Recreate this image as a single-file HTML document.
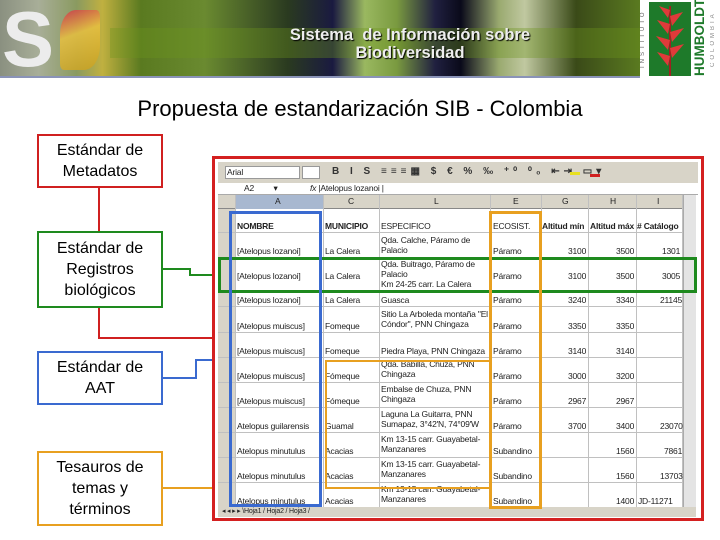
<!DOCTYPE html>
<html><head><meta charset="utf-8"><style>
*{margin:0;padding:0;box-sizing:border-box}
body{width:720px;height:540px;background:#fff;position:relative;overflow:hidden;font-family:"Liberation Sans",sans-serif}
.a{position:absolute}
.box{position:absolute;border:2px solid;text-align:center;font-size:16px;line-height:21px;color:#000;display:flex;align-items:center;justify-content:center;background:#fff}
.t{position:absolute;font-size:8.5px;color:#222;white-space:nowrap;font-family:"Liberation Sans Narrow","Liberation Sans",sans-serif;letter-spacing:-0.2px}
.vl{position:absolute;width:1px;background:#c0c0c0}
.hl{position:absolute;height:1px;background:#c0c0c0}
.vt{position:absolute;writing-mode:vertical-rl;transform:rotate(180deg);text-align:center}
</style></head><body>
<!-- header -->
<div class="a" style="left:0;top:0;width:640px;height:77px;background:linear-gradient(90deg,#8a9080 0%,#a8ae98 6%,#8a9a60 12%,#c0b040 16%,#5a7a20 22%,#6a8a30 32%,#2a3a20 45%,#1a1a40 52%,#9ab860 57%,#7a9a40 62%,#202040 68%,#0a0a1a 72%,#9aaa70 78%,#c0c8a0 82%,#3a4a18 90%,#5a7a20 100%)"></div>
<div class="a" style="left:110px;top:28px;width:530px;height:30px;background:rgba(110,150,30,0.35)"></div>
<div class="a" style="left:2px;top:0px;font-size:78px;font-weight:bold;color:#ececec;line-height:78px">S</div>
<div class="a" style="left:60px;top:10px;width:40px;height:60px;background:linear-gradient(160deg,#d0304a 0%,#e8c040 40%,#c8a020 100%);border-radius:40% 10% 40% 10%;opacity:.85"></div>
<div class="a" style="left:200px;top:26px;width:420px;text-align:center;color:#eee;font-weight:bold;font-size:16.5px;line-height:18px;text-shadow:1px 1px 1px #000">Sistema &nbsp;de Información sobre<br>Biodiversidad</div>
<div class="a" style="left:0;top:76px;width:640px;height:2px;background:#8a93b8"></div>
<div class="a" style="left:640px;top:0;width:80px;height:80px;background:#fff"></div>
<div class="a" style="left:649px;top:2px;width:42px;height:74px;background:#1e7a2a"></div>
<svg class="a" style="left:649px;top:2px" width="42" height="74"><path d="M21 4 L21 74" stroke="#a02020" stroke-width="2"/><g fill="#e03a3a"><path d="M21 8 L10 4 L19 16Z"/><path d="M21 14 L34 10 L23 24Z"/><path d="M21 22 L8 18 L19 32Z"/><path d="M21 30 L35 26 L23 40Z"/><path d="M21 38 L7 34 L19 48Z"/><path d="M21 46 L35 42 L23 56Z"/><path d="M21 54 L8 50 L19 64Z"/></g></svg>
<div class="vt" style="left:640px;top:2px;height:74px;width:8px;font-size:6px;color:#666;letter-spacing:3px">INSTITUTO</div>
<div class="vt" style="left:692px;top:2px;height:74px;width:16px;font-size:13.5px;font-weight:bold;color:#1e7a2a;line-height:16px">HUMBOLDT</div>
<div class="vt" style="left:710px;top:2px;height:74px;width:8px;font-size:6px;color:#888;letter-spacing:3px">COLOMBIA</div>
<!-- title -->
<div class="a" style="left:0;top:96px;width:720px;text-align:center;font-size:22px;color:#000">Propuesta de estandarización SIB - Colombia</div>
<!-- connectors -->
<div class="a" style="left:98px;top:187px;width:2px;height:45px;background:#d02020"></div>
<div class="a" style="left:98px;top:307px;width:2px;height:32px;background:#d02020"></div>
<div class="a" style="left:98px;top:337px;width:116px;height:2px;background:#d02020"></div>
<div class="a" style="left:162px;top:268px;width:28px;height:2px;background:#1e8a1e"></div>
<div class="a" style="left:189px;top:268px;width:2px;height:8px;background:#1e8a1e"></div>
<div class="a" style="left:189px;top:274px;width:30px;height:2px;background:#1e8a1e"></div>
<div class="a" style="left:162px;top:377px;width:35px;height:2px;background:#3a6ad0"></div>
<div class="a" style="left:195px;top:359px;width:2px;height:20px;background:#3a6ad0"></div>
<div class="a" style="left:195px;top:359px;width:35px;height:2px;background:#3a6ad0"></div>
<div class="a" style="left:162px;top:487px;width:165px;height:2px;background:#e8a020"></div>
<!-- boxes -->
<div class="box" style="left:37px;top:134px;width:126px;height:54px;border-color:#d02020">Estándar de<br>Metadatos</div>
<div class="box" style="left:37px;top:231px;width:126px;height:77px;border-color:#1e8a1e">Estándar de<br>Registros<br>biológicos</div>
<div class="box" style="left:37px;top:351px;width:126px;height:54px;border-color:#3a6ad0">Estándar de<br>AAT</div>
<div class="box" style="left:37px;top:451px;width:126px;height:75px;border-color:#e8a020">Tesauros de<br>temas y<br>términos</div>
<!-- spreadsheet -->
<div class="a" style="left:212px;top:156px;width:492px;height:365px;border:3px solid #d42020;background:#fff"></div>
<div class="a" style="left:218px;top:162px;width:480px;height:21px;background:#d8d4c8"></div>
<div class="a" style="left:225px;top:166px;width:75px;height:13px;background:#fff;border:1px solid #999"></div>
<div class="t" style="left:227px;top:167px">Arial</div>
<div class="a" style="left:302px;top:166px;width:18px;height:13px;background:#fff;border:1px solid #999"></div>
<div class="t" style="left:332px;top:166px;font-size:10px;font-weight:bold;color:#333;letter-spacing:4px">B I S ≡≡≡▦ $ € % ‰ ⁺⁰ ⁰₀ ⇤⇥ ▭▾</div>
<div class="a" style="left:570px;top:172px;width:10px;height:3px;background:#e8e020"></div>
<div class="a" style="left:590px;top:174px;width:10px;height:3px;background:#d02020"></div>
<div class="a" style="left:218px;top:183px;width:480px;height:12px;background:#fff;border-bottom:1px solid #aaa"></div>
<div class="t" style="left:244px;top:183px">A2 &nbsp;&nbsp;&nbsp;&nbsp;&nbsp;&nbsp;&nbsp;&nbsp;▾</div>
<div class="t" style="left:310px;top:183px"><i>fx</i> |Atelopus lozanoi |</div>
<div class="a" style="left:218px;top:195px;width:465px;height:14px;background:#d8d4c8;border-bottom:1px solid #888"></div>
<div class="a" style="left:235px;top:195px;width:88px;height:14px;background:#a8b8d0"></div>
<div class="a" style="left:218px;top:209px;width:17px;height:298px;background:#d8d4c8"></div>
<div class="a" style="left:683px;top:195px;width:13px;height:312px;background:#e4e4e4;border-left:1px solid #aaa"></div>
<div class="a" style="left:218px;top:507px;width:478px;height:10px;background:#d8d4c8"></div>
<div class="t" style="left:222px;top:507px;font-size:7px">◂ ◂ ▸ ▸ \Hoja1 / Hoja2 / Hoja3 /</div>
<div class="t" style="left:275px;top:196px">A</div><div class="t" style="left:348px;top:196px">C</div><div class="t" style="left:434px;top:196px">L</div><div class="t" style="left:513px;top:196px">E</div><div class="t" style="left:562px;top:196px">G</div><div class="t" style="left:610px;top:196px">H</div><div class="t" style="left:657px;top:196px">I</div>
<!-- grid -->
<div class="vl" style="left:235px;top:195px;height:312px"></div><div class="vl" style="left:323px;top:195px;height:312px"></div><div class="vl" style="left:379px;top:195px;height:312px"></div><div class="vl" style="left:490px;top:195px;height:312px"></div><div class="vl" style="left:541px;top:195px;height:312px"></div><div class="vl" style="left:588px;top:195px;height:312px"></div><div class="vl" style="left:636px;top:195px;height:312px"></div><div class="vl" style="left:682px;top:195px;height:312px"></div>
<div class="hl" style="left:218px;top:232px;width:465px"></div><div class="hl" style="left:218px;top:257px;width:465px"></div><div class="hl" style="left:218px;top:290px;width:465px"></div><div class="hl" style="left:218px;top:306px;width:465px"></div><div class="hl" style="left:218px;top:332px;width:465px"></div><div class="hl" style="left:218px;top:357px;width:465px"></div><div class="hl" style="left:218px;top:382px;width:465px"></div><div class="hl" style="left:218px;top:407px;width:465px"></div><div class="hl" style="left:218px;top:432px;width:465px"></div><div class="hl" style="left:218px;top:457px;width:465px"></div><div class="hl" style="left:218px;top:482px;width:465px"></div>
<!-- cells -->
<div class="t" style="left:237px;top:221px;font-weight:bold">NOMBRE</div><div class="t" style="left:325px;top:221px;font-weight:bold">MUNICIPIO</div><div class="t" style="left:381px;top:221px">ESPECIFICO</div><div class="t" style="left:493px;top:221px">ECOSIST.</div><div class="t" style="left:542px;top:221px;font-weight:bold">Altitud mín</div><div class="t" style="left:590px;top:221px;font-weight:bold">Altitud máx</div><div class="t" style="left:637px;top:221px;font-weight:bold"># Catálogo</div>
<div class="t" style="left:237px;top:246px">[Atelopus lozanoi]</div><div class="t" style="left:325px;top:246px">La Calera</div><div class="t" style="left:381px;top:235px">Qda. Calche, Páramo de<br>Palacio</div><div class="t" style="left:493px;top:246px">Páramo</div><div class="t" style="left:568px;top:246px">3100</div><div class="t" style="left:616px;top:246px">3500</div><div class="t" style="left:662px;top:246px">1301</div>
<div class="t" style="left:237px;top:271px">[Atelopus lozanoi]</div><div class="t" style="left:325px;top:271px">La Calera</div><div class="t" style="left:381px;top:259px;line-height:10px">Qda. Buitrago, Páramo de<br>Palacio<br>Km 24-25 carr. La Calera</div><div class="t" style="left:493px;top:271px">Páramo</div><div class="t" style="left:568px;top:271px">3100</div><div class="t" style="left:616px;top:271px">3500</div><div class="t" style="left:662px;top:271px">3005</div>
<div class="t" style="left:237px;top:295px">[Atelopus lozanoi]</div><div class="t" style="left:325px;top:295px">La Calera</div><div class="t" style="left:381px;top:295px">Guasca</div><div class="t" style="left:493px;top:295px">Páramo</div><div class="t" style="left:568px;top:295px">3240</div><div class="t" style="left:616px;top:295px">3340</div><div class="t" style="left:660px;top:295px">21145</div>
<div class="t" style="left:237px;top:321px">[Atelopus muiscus]</div><div class="t" style="left:325px;top:321px">Fomeque</div><div class="t" style="left:381px;top:309px">Sitio La Arboleda montaña "El<br>Cóndor", PNN Chingaza</div><div class="t" style="left:493px;top:321px">Páramo</div><div class="t" style="left:568px;top:321px">3350</div><div class="t" style="left:616px;top:321px">3350</div>
<div class="t" style="left:237px;top:346px">[Atelopus muiscus]</div><div class="t" style="left:325px;top:346px">Fomeque</div><div class="t" style="left:381px;top:346px">Piedra Playa, PNN Chingaza</div><div class="t" style="left:493px;top:346px">Páramo</div><div class="t" style="left:568px;top:346px">3140</div><div class="t" style="left:616px;top:346px">3140</div>
<div class="t" style="left:237px;top:371px">[Atelopus muiscus]</div><div class="t" style="left:325px;top:371px">Fómeque</div><div class="t" style="left:381px;top:359px">Qda. Babilla, Chuza, PNN<br>Chingaza</div><div class="t" style="left:493px;top:371px">Páramo</div><div class="t" style="left:568px;top:371px">3000</div><div class="t" style="left:616px;top:371px">3200</div>
<div class="t" style="left:237px;top:396px">[Atelopus muiscus]</div><div class="t" style="left:325px;top:396px">Fómeque</div><div class="t" style="left:381px;top:384px">Embalse de Chuza, PNN<br>Chingaza</div><div class="t" style="left:493px;top:396px">Páramo</div><div class="t" style="left:568px;top:396px">2967</div><div class="t" style="left:616px;top:396px">2967</div>
<div class="t" style="left:237px;top:421px">Atelopus guilarensis</div><div class="t" style="left:325px;top:421px">Guamal</div><div class="t" style="left:381px;top:409px">Laguna La Guitarra, PNN<br>Sumapaz, 3°42'N, 74°09'W</div><div class="t" style="left:493px;top:421px">Páramo</div><div class="t" style="left:568px;top:421px">3700</div><div class="t" style="left:616px;top:421px">3400</div><div class="t" style="left:660px;top:421px">23070</div>
<div class="t" style="left:237px;top:446px">Atelopus minutulus</div><div class="t" style="left:325px;top:446px">Acacias</div><div class="t" style="left:381px;top:434px">Km 13-15 carr. Guayabetal-<br>Manzanares</div><div class="t" style="left:493px;top:446px">Subandino</div><div class="t" style="left:616px;top:446px">1560</div><div class="t" style="left:664px;top:446px">7861</div>
<div class="t" style="left:237px;top:471px">Atelopus minutulus</div><div class="t" style="left:325px;top:471px">Acacias</div><div class="t" style="left:381px;top:459px">Km 13-15 carr. Guayabetal-<br>Manzanares</div><div class="t" style="left:493px;top:471px">Subandino</div><div class="t" style="left:616px;top:471px">1560</div><div class="t" style="left:660px;top:471px">13703</div>
<div class="t" style="left:237px;top:496px">Atelopus minutulus</div><div class="t" style="left:325px;top:496px">Acacias</div><div class="t" style="left:381px;top:484px">Km 13-15 carr. Guayabetal-<br>Manzanares</div><div class="t" style="left:493px;top:496px">Subandino</div><div class="t" style="left:616px;top:496px">1400</div><div class="t" style="left:638px;top:496px">JD-11271</div>
<!-- highlight rects -->
<div class="a" style="left:218px;top:257px;width:479px;height:36px;border:3px solid #1e8a1e"></div>
<div class="a" style="left:229px;top:211px;width:93px;height:296px;border:3px solid #3a6ad0"></div>
<div class="a" style="left:489px;top:211px;width:53px;height:298px;border:3px solid #e8a020"></div>
<div class="a" style="left:325px;top:360px;width:165px;height:129px;border:2px solid #e8a020;border-right:none"></div>
</body></html>
